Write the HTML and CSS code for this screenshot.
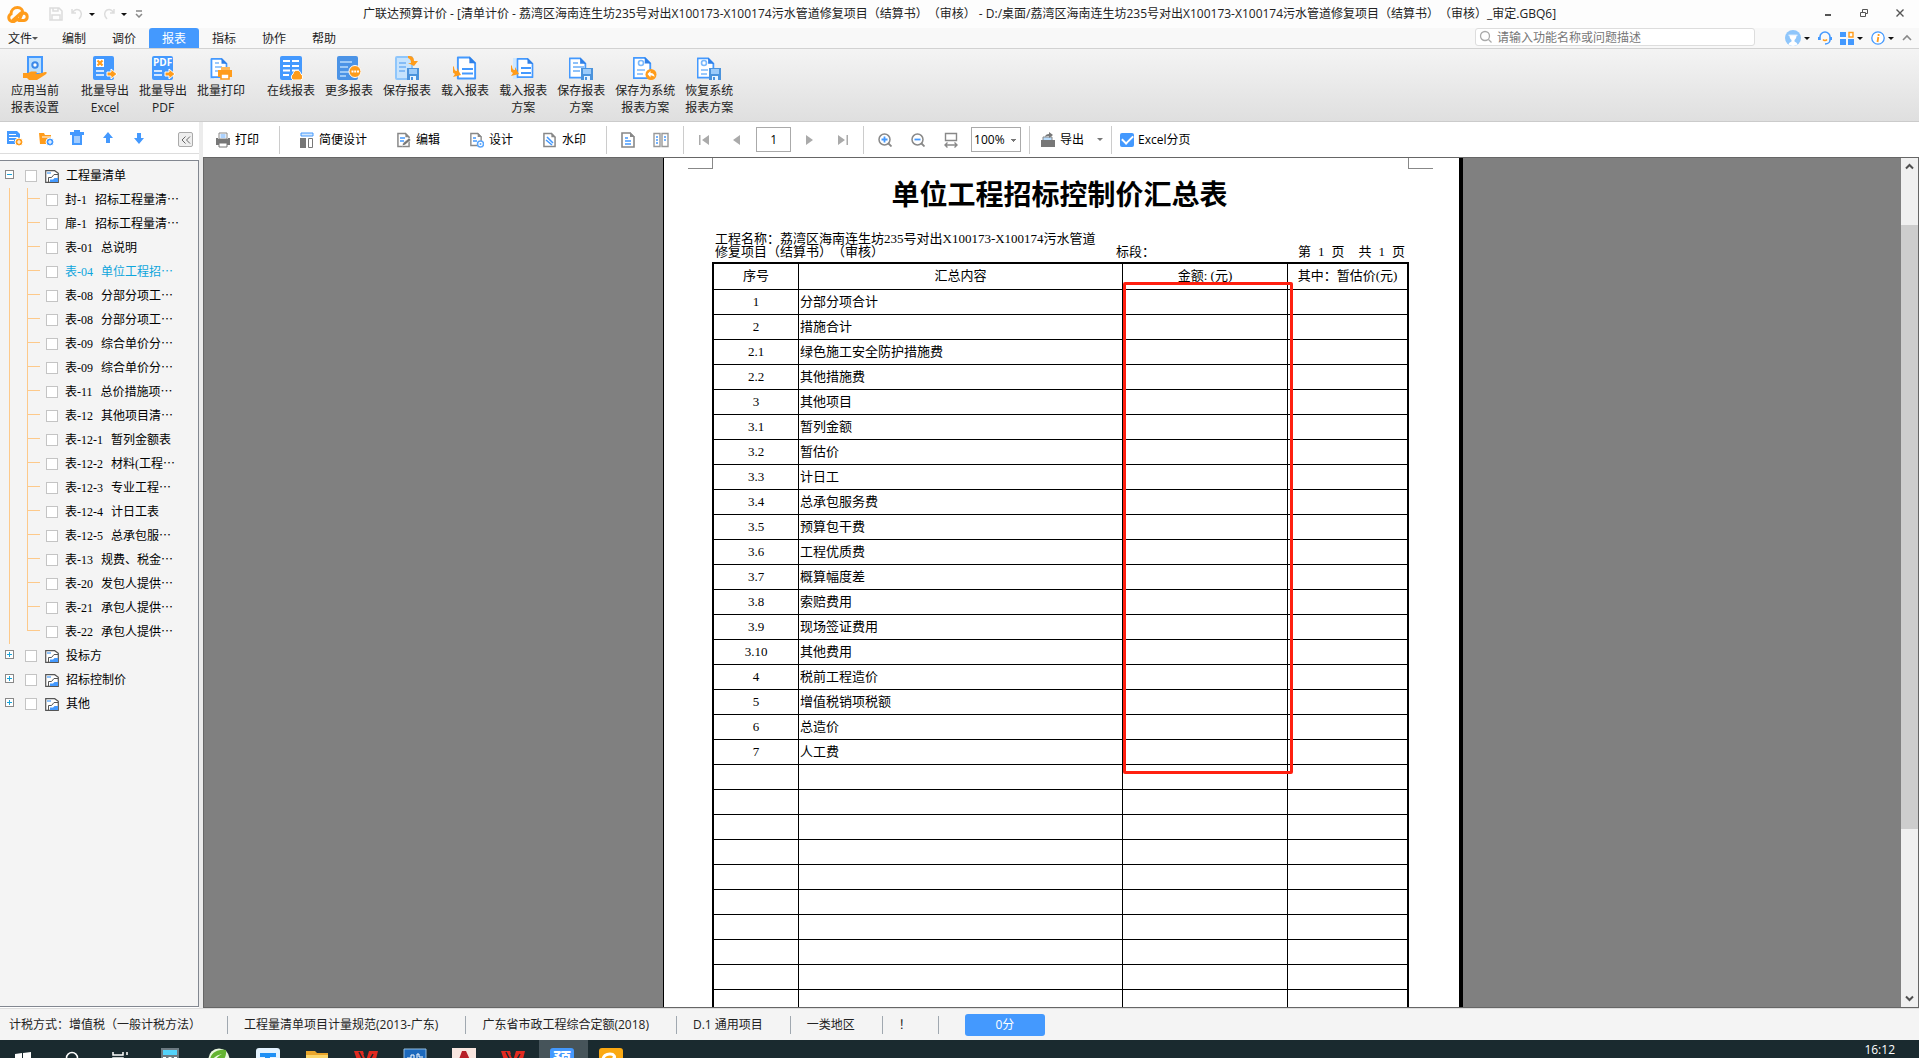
FILE: index.html
```html
<!DOCTYPE html>
<html lang="zh-CN">
<head>
    <meta charset="UTF-8">
    <meta name="viewport" content="width=device-width, initial-scale=1.0">
    <title>广联达预算计价</title>
    <link rel="stylesheet" href="styles.css">
</head>
<body>
    <!-- 公用图标 -->
    <svg class="defs" aria-hidden="true">
        <symbol id="doc" viewBox="0 0 24 24">
            <path d="M3 1h12l6 6v16H3z" fill="#fff" stroke="#4499fe" stroke-width="2" stroke-linejoin="round"/>
            <path d="M15 0l7 7h-7z" fill="#2f7fe6"/>
        </symbol>
        <symbol id="disk" viewBox="0 0 12 12">
            <path d="M0 0h12v12H0z" fill="#4b93dc"/>
            <path d="M2 1h8v5H2z" fill="#9ccbfa"/>
            <path d="M3 8h6v4H3z" fill="#e9f4ff"/>
            <path d="M4 9h2v3H4z" fill="#4b93dc"/>
        </symbol>
        <symbol id="page" viewBox="0 0 14 16">
            <path d="M1 1h8l4 4v10H1z" fill="#fff" stroke="#888" stroke-width="1.6"/>
            <path d="M9 0v5h5z" fill="#888"/>
        </symbol>
        <symbol id="folder" viewBox="0 0 14 13">
            <path d="M.7.7h9l3.600 2.600v9H.7z" fill="#fff" stroke="#555" stroke-width="1.200"/>
            <path d="M2 2h4v2H2z" fill="#8fc3fb"/>
            <path d="M3.500 12V7.500h3L9 4.500h4" fill="none" stroke="#555"/>
            <path d="M5 12V9.500h3L9.500 8H13v4z" fill="#4499fe"/>
        </symbol>
        <symbol id="wps" viewBox="0 0 24 24">
            <path d="M0 0h9l3 10L15 0h9l-6 24H8z" fill="#e22a20"/>
            <path d="M10 3l4 9 5-9M5 1l5 10" stroke="#1a2a2f" stroke-width="1.500" fill="none"/>
        </symbol>
    </svg>

    <header class="titlebar">
        <svg class="logo" viewBox="0 0 22 17"><path d="M11 13l-4 2.500H5A4 4 0 0 1 4 8c0-4 3-6.500 6.500-6.500C14 1.500 15.500 4 15.500 5.500L6 14M12 14.500h5a3.800 3.800 0 0 0 0-7.500c-3 0-2.500 3-5 7.500" fill="none" stroke="#ff9c1b" stroke-width="3" stroke-linecap="round"/></svg>
        <div class="quick">
            <button type="button" aria-label="保存"><svg width="14" height="14" viewBox="0 0 14 14"><path d="M1 1h9l3 3v9H1zM4 1v3h5V1M3 13V8h8v5" fill="none" stroke="#dcdcdc" stroke-width="1.500"/></svg></button>
            <button type="button" aria-label="撤销"><svg width="12" height="12" viewBox="0 0 12 12"><path d="M1 1v4h4M1 5c2-3 5-4 7-3s4 5 0 9" fill="none" stroke="#ddd" stroke-width="1.500"/></svg><i class="caret"></i></button>
            <button type="button" aria-label="重做"><svg width="12" height="12" viewBox="0 0 12 12"><path d="M11 1v4H7M11 5C9 2 6 1 4 2s-4 5 0 9" fill="none" stroke="#ddd" stroke-width="1.500"/></svg><i class="caret"></i></button>
            <button type="button" aria-label="自定义"><svg width="8" height="8" viewBox="0 0 8 8"><path d="M1 1h6M1 4l3 3 3-3" fill="none" stroke="#888" stroke-width="1.500"/></svg></button>
        </div>
        <h1 class="window-title">广联达预算计价 - [清单计价 - 荔湾区海南连生坊235号对出X100173-X100174污水管道修复项目（结算书）（审核） - D:/桌面/荔湾区海南连生坊235号对出X100173-X100174污水管道修复项目（结算书）（审核）_审定.GBQ6]</h1>
        <div class="window-controls">
            <button type="button" aria-label="最小化"><svg width="10" height="10" viewBox="0 0 10 10"><path d="M2 7h6" stroke="#555" stroke-width="2"/></svg></button>
            <button type="button" aria-label="还原"><svg width="10" height="10" viewBox="0 0 10 10"><path d="M1.500 4.500h5v4h-5zM3.500 4V1.500h5v4H7" fill="none" stroke="#555"/></svg></button>
            <button type="button" aria-label="关闭"><svg width="10" height="10" viewBox="0 0 10 10"><path d="M1.500 1.500l7 7M8.500 1.500l-7 7" stroke="#555" stroke-width="1.400"/></svg></button>
        </div>
    </header>

    <nav class="menubar">
        <button type="button" class="file">文件<i class="caret"></i></button>
        <button type="button">编制</button>
        <button type="button">调价</button>
        <button type="button" class="active">报表</button>
        <button type="button">指标</button>
        <button type="button">协作</button>
        <button type="button">帮助</button>
        <label class="search">
            <svg width="14" height="14" viewBox="0 0 14 14"><circle cx="6" cy="6" r="4.500" fill="none" stroke="#aaa" stroke-width="1.300"/><path d="M9.500 9.500l3 3" stroke="#aaa" stroke-width="1.300"/></svg>
            <input type="text" placeholder="请输入功能名称或问题描述" aria-label="搜索">
        </label>
        <div class="account">
            <button type="button" aria-label="用户"><svg width="16" height="16" viewBox="0 0 16 16"><circle cx="8" cy="8" r="8" fill="#8fc6fb"/><path d="M3.500 14.500c.5-2 2-2.500 3-3V10C5 9 4.500 7 4.500 5.500h7C11.500 7 11 9 9.500 10v1.500c1 .5 2.500 1 3 3C10 16.400 6 16.400 3.500 14.500z" fill="#fff"/><path d="M3.500 5.200h9" stroke="#fff"/></svg><i class="caret"></i></button>
            <button type="button" aria-label="客服"><svg width="14" height="14" viewBox="0 0 14 14"><path d="M2 9V6a5 5 0 0 1 10 0v3c0 2-2 4-5 4" fill="none" stroke="#4499fe" stroke-width="1.600"/><path d="M0 6h2v3H0zM12 6h2v3h-2z" fill="#4499fe"/><path d="M5 8.500c1 1.300 3 1.300 4 0" fill="none" stroke="#ff9c1b" stroke-width="1.500"/></svg></button>
            <button type="button" aria-label="应用"><svg width="14" height="14" viewBox="0 0 14 14"><path d="M0 1h6v5H0zM0 8h6v6H0zM8 8h6v6H8z" fill="#4499fe"/><path d="M9 1.500h4V6H9z" fill="#fff" stroke="#ff9c1b" stroke-width="1.400"/></svg><i class="caret"></i></button>
            <button type="button" aria-label="信息"><svg width="14" height="14" viewBox="0 0 14 14"><circle cx="7" cy="7" r="6.200" fill="#fff" stroke="#4499fe" stroke-width="1.300"/><path d="M7.600 3v2M7.300 6l-.8 5" stroke="#ff9c1b" stroke-width="1.800"/></svg><i class="caret"></i></button>
            <button type="button" aria-label="收起功能区"><svg width="10" height="8" viewBox="0 0 10 8"><path d="M1 6l4-4 4 4" fill="none" stroke="#888" stroke-width="1.600"/></svg></button>
        </div>
    </nav>

    <!-- 功能区 -->
    <section class="ribbon">
        <button type="button" class="group-end">
            <svg viewBox="0 0 24 24"><path d="M5 1h14v17H5z" fill="#b9defd" stroke="#4499fe" stroke-width="2"/><circle cx="12" cy="9" r="2.700" fill="#fff" stroke="#3a88e8" stroke-width="2"/><path d="M0 17h5l3-1.500h4c3 0 2 2.500 0 2.500h3l7-2c3 0 2 2-1 3.500L14 24H6l-2-2H0z" fill="#ff9c1b"/></svg>
            应用当前<br>报表设置
        </button>
        <button type="button">
            <svg viewBox="0 0 24 24"><rect x="0" y="0" width="21" height="24" rx="2" fill="#4499fe"/><path d="M3 3h8v8H3z" fill="#fff"/><path d="M4.500 4.500l5 5M9.500 4.500l-5 5" stroke="#ff9c1b" stroke-width="2.200"/><path d="M3 15h8M3 19h8" stroke="#fff" stroke-width="1.600"/><path d="M14 16h4v-3l6 5-6 5v-3h-4z" fill="#ff9c1b" stroke="#fff"/></svg>
            批量导出<br>Excel
        </button>
        <button type="button">
            <svg viewBox="0 0 24 24"><rect x="1" y="0" width="21" height="24" rx="2" fill="#4499fe"/><text x="2" y="10" class="pdf">PDF</text><path d="M3 15h8M3 19h8" stroke="#fff" stroke-width="1.600"/><path d="M14 16h4v-3l6 5-6 5v-3h-4z" fill="#ff9c1b" stroke="#fff"/></svg>
            批量导出<br>PDF
        </button>
        <button type="button" class="group-end">
            <svg viewBox="0 0 24 24"><path d="M1 3h4v20H1z" fill="#c4e2fd"/><use href="#doc" width="20" height="24"/><path d="M6 7h4M6 11h7M6 15h3" stroke="#7ab8fb" stroke-width="1.600"/><path d="M12 11h9v4h-9z" fill="#ffb95a"/><path d="M9 14h14v7H9z" fill="#ff9c1b"/><path d="M12 18h8v5h-8z" fill="#fff" stroke="#ff9c1b" stroke-width="1.600"/></svg>
            批量打印
        </button>
        <button type="button">
            <svg viewBox="0 0 24 24"><rect x="1" y="0" width="22" height="24" rx="2" fill="#4499fe"/><path d="M4 5h7M13 5h7M4 10h7M13 10h7M4 14.500h7M13 14.500h7M4 19h6" stroke="#fff" stroke-width="2"/><path d="M14 24a3.500 3.500 0 0 1 0-6c1-5 7-5 8 0a3.500 3.500 0 0 1 0 6z" fill="#ff9c1b" stroke="#fff"/></svg>
            在线报表
        </button>
        <button type="button">
            <svg viewBox="0 0 24 24"><rect x="0" y="0" width="21" height="24" rx="2" fill="#4b93e6"/><path d="M3 6h12M3 11h8M3 16h9M3 20h6" stroke="#b9dcfc" stroke-width="1.600"/><circle cx="18" cy="15.500" r="6" fill="#ff9c1b" stroke="#fff"/><path d="M14.500 15.500h2M17.200 15.500h2M20 15.500h2" stroke="#fff" stroke-width="1.800"/></svg>
            更多报表
        </button>
        <button type="button">
            <svg viewBox="0 0 24 24"><rect x="1" y="1" width="16" height="22" rx="1" fill="#c6e3fd" stroke="#8fc6fb" stroke-width="2"/><path d="M4 7h7M4 11h7M4 15h6" stroke="#6fb0f5" stroke-width="1.500"/><path d="M13 0c5 0 6 2 6 5h4l-4 5-6-3h3c0-3-1-4-3-5z" fill="#ff9c1b"/><use href="#disk" x="12" y="12" width="12" height="12"/></svg>
            保存报表
        </button>
        <button type="button">
            <svg viewBox="0 0 24 24"><use href="#doc" x="2" width="23" height="24"/><path d="M9 13h11M9 17.500h11" stroke="#4499fe" stroke-width="1.800"/><path d="M1 10c0 4 1 5 3 5v-3l4 7-8 2 2-3c-3-1-4-5-1-8z" fill="#ff9c1b"/></svg>
            载入报表
        </button>
        <button type="button">
            <svg viewBox="0 0 24 24"><path d="M2 2h5v21H2z" fill="#d0e8fe"/><use href="#doc" x="4" width="20" height="24"/><path d="M10 12h10M10 17h10" stroke="#4499fe" stroke-width="1.800"/><path d="M1 9c0 4 1 5 3 5v-3l4 7-8 2 2-3c-3-1-4-5-1-8z" fill="#ff9c1b"/></svg>
            载入报表<br>方案
        </button>
        <button type="button">
            <svg viewBox="0 0 24 24"><use href="#doc" x="-2" width="21" height="24"/><path d="M4 7h5M4 11h11M4 15h7" stroke="#69adf8" stroke-width="1.600"/><use href="#disk" x="12" y="12" width="12" height="12"/></svg>
            保存报表<br>方案
        </button>
        <button type="button">
            <svg viewBox="0 0 24 24"><use href="#doc" x="-2" width="22" height="24"/><circle cx="8" cy="7" r="2.500" fill="none" stroke="#7ab8fb" stroke-width="1.600"/><path d="M4 14h8M4 18h6" stroke="#7ab8fb" stroke-width="1.600"/><circle cx="18" cy="18.500" r="5.500" fill="#ff9c1b"/><path d="M14.500 18l3-3v2c3 0 4 2 4 4-1-1-2-1.500-4-1.500v2z" fill="#fff"/></svg>
            保存为系统<br>报表方案
        </button>
        <button type="button">
            <svg viewBox="0 0 24 24"><use href="#doc" x="-2" width="21" height="24"/><circle cx="7" cy="7" r="2.500" fill="none" stroke="#7ab8fb" stroke-width="1.600"/><path d="M4 14h7M4 18h6" stroke="#7ab8fb" stroke-width="1.600"/><use href="#disk" x="12" y="12" width="12" height="12"/></svg>
            恢复系统<br>报表方案
        </button>
    </section>

    <main class="workspace">
        <aside class="sidebar">
            <div class="side-tools">
                <button type="button" aria-label="新建报表"><svg width="16" height="16" viewBox="0 0 16 16"><path d="M0 1h10l3 3v10H0z" fill="#4499fe"/><path d="M2 4.500h7M2 7.500h9M2 10.500h5" stroke="#fff"/><circle cx="12" cy="12" r="4" fill="#ff9c1b" stroke="#fff"/><path d="M10 12h4M12 10v4" stroke="#fff" stroke-width="1.200"/></svg></button>
                <button type="button" aria-label="新建文件夹"><svg width="16" height="16" viewBox="0 0 16 16"><path d="M1 3h5l1 2h6v9H2z" fill="#ff9c1b"/><path d="M4 7h10" stroke="#fff"/><circle cx="12" cy="12" r="4" fill="#4499fe" stroke="#fff"/><path d="M10 12h4M12 10v4" stroke="#fff" stroke-width="1.200"/></svg></button>
                <button type="button" aria-label="删除"><svg width="16" height="16" viewBox="0 0 16 16"><path d="M1 2h4V0h6v2h4v3H1zM3 5h10v10H3z" fill="#4499fe"/><path d="M6 6v7M8 6v7M10 6v7" stroke="#fff"/></svg></button>
                <button type="button" aria-label="上移"><svg width="16" height="16" viewBox="0 0 16 16"><path d="M8 2l5 6h-3v5H6V8H3z" fill="#4499fe"/></svg></button>
                <button type="button" aria-label="下移"><svg width="16" height="16" viewBox="0 0 16 16"><path d="M8 14l5-6h-3V3H6v5H3z" fill="#4499fe"/></svg></button>
                <button type="button" class="collapse" aria-label="折叠"><svg width="10" height="8" viewBox="0 0 10 8"><path d="M4.500.5L1 4l3.500 3.500M9 .5L5.500 4 9 7.500" fill="none" stroke="#666"/></svg></button>
            </div>
            <ul class="tree">
                <li>
                    <div class="node"><button type="button" class="toggle open" aria-label="折叠"></button><input type="checkbox" id="g1"><svg class="folder"><use href="#folder"/></svg><label for="g1">工程量清单</label></div>
                    <ul class="leaves">
                        <li><input type="checkbox" id="r1"><label for="r1"><span>封-1</span><span>招标工程量清⋯</span></label></li>
                        <li><input type="checkbox" id="r2"><label for="r2"><span>扉-1</span><span>招标工程量清⋯</span></label></li>
                        <li><input type="checkbox" id="r3"><label for="r3"><span>表-01</span><span>总说明</span></label></li>
                        <li class="current"><input type="checkbox" id="r4"><label for="r4"><span>表-04</span><span>单位工程招⋯</span></label></li>
                        <li><input type="checkbox" id="r5"><label for="r5"><span>表-08</span><span>分部分项工⋯</span></label></li>
                        <li><input type="checkbox" id="r6"><label for="r6"><span>表-08</span><span>分部分项工⋯</span></label></li>
                        <li><input type="checkbox" id="r7"><label for="r7"><span>表-09</span><span>综合单价分⋯</span></label></li>
                        <li><input type="checkbox" id="r8"><label for="r8"><span>表-09</span><span>综合单价分⋯</span></label></li>
                        <li><input type="checkbox" id="r9"><label for="r9"><span>表-11</span><span>总价措施项⋯</span></label></li>
                        <li><input type="checkbox" id="r10"><label for="r10"><span>表-12</span><span>其他项目清⋯</span></label></li>
                        <li><input type="checkbox" id="r11"><label for="r11"><span>表-12-1</span><span>暂列金额表</span></label></li>
                        <li><input type="checkbox" id="r12"><label for="r12"><span>表-12-2</span><span>材料(工程⋯</span></label></li>
                        <li><input type="checkbox" id="r13"><label for="r13"><span>表-12-3</span><span>专业工程⋯</span></label></li>
                        <li><input type="checkbox" id="r14"><label for="r14"><span>表-12-4</span><span>计日工表</span></label></li>
                        <li><input type="checkbox" id="r15"><label for="r15"><span>表-12-5</span><span>总承包服⋯</span></label></li>
                        <li><input type="checkbox" id="r16"><label for="r16"><span>表-13</span><span>规费、税金⋯</span></label></li>
                        <li><input type="checkbox" id="r17"><label for="r17"><span>表-20</span><span>发包人提供⋯</span></label></li>
                        <li><input type="checkbox" id="r18"><label for="r18"><span>表-21</span><span>承包人提供⋯</span></label></li>
                        <li><input type="checkbox" id="r19"><label for="r19"><span>表-22</span><span>承包人提供⋯</span></label></li>
                    </ul>
                </li>
                <li><div class="node"><button type="button" class="toggle" aria-label="展开"></button><input type="checkbox" id="g2"><svg class="folder"><use href="#folder"/></svg><label for="g2">投标方</label></div></li>
                <li><div class="node"><button type="button" class="toggle" aria-label="展开"></button><input type="checkbox" id="g3"><svg class="folder"><use href="#folder"/></svg><label for="g3">招标控制价</label></div></li>
                <li><div class="node"><button type="button" class="toggle" aria-label="展开"></button><input type="checkbox" id="g4"><svg class="folder"><use href="#folder"/></svg><label for="g4">其他</label></div></li>
            </ul>
        </aside>

        <section class="viewer">
            <div class="toolbar">
                <div class="tools">
                    <button type="button" class="tool"><svg width="14" height="16" viewBox="0 0 14 16"><path d="M3 1h8v6H3z" fill="#fff" stroke="#888"/><path d="M4.500 3h5M4.500 5h5" stroke="#5aa5fb"/><path d="M0 6h2v1h10V6h2v7H0z" fill="#777"/><path d="M3 11h8v4H3z" fill="#fff" stroke="#777"/></svg>打印</button>
                </div>
                <div class="tools">
                    <button type="button" class="tool"><svg width="14" height="16" viewBox="0 0 14 16"><path d="M1 1h12v3H1z" fill="#d5e9fe" stroke="#4499fe"/><path d="M0 6h6v10H0z" fill="#777"/><path d="M8.500 6.500h4v9h-4z" fill="#fff" stroke="#777"/></svg>简便设计</button>
                    <button type="button" class="tool"><svg width="14" height="16" viewBox="0 0 14 16"><use href="#page" width="13" height="16"/><path d="M3 6h5M3 9h4" stroke="#4499fe" stroke-width="1.400"/><path d="M5 14l1-3 6-5 2 2-6 5z" fill="#777" stroke="#fff" stroke-width=".6"/></svg>编辑</button>
                    <button type="button" class="tool"><svg width="14" height="16" viewBox="0 0 14 16"><use href="#page" width="12" height="15"/><path d="M3 6h3M3 9h4" stroke="#4499fe" stroke-width="1.400"/><circle cx="10.500" cy="12" r="3" fill="#fff" stroke="#5aa5fb" stroke-width="1.500"/><circle cx="10.500" cy="12" r="1" fill="#5aa5fb"/></svg>设计</button>
                    <button type="button" class="tool"><svg width="14" height="16" viewBox="0 0 14 16"><use href="#page" width="13" height="16"/><path d="M3 8l6 5M4 5l6 6" stroke="#4499fe" stroke-width="1.600"/></svg>水印</button>
                </div>
                <div class="tools">
                    <button type="button" class="icon-tool" aria-label="单页"><svg width="14" height="16" viewBox="0 0 14 16"><use href="#page" width="14" height="16"/><path d="M4 6h3M4 9h6M4 12h6" stroke="#4499fe" stroke-width="1.500"/></svg></button>
                    <button type="button" class="icon-tool" aria-label="双页"><svg width="16" height="16" viewBox="0 0 16 16"><path d="M1 1.500h6v13H1zM9 1.500h6v13H9z" fill="#fff" stroke="#999" stroke-width="1.400"/><path d="M3 5h2M3 8h2M3 11h2M11 5h2M11 8h2" stroke="#4499fe" stroke-width="1.500"/></svg></button>
                </div>
                <div class="tools">
                    <button type="button" class="icon-tool" aria-label="首页"><svg width="14" height="12" viewBox="0 0 14 12"><path d="M1 1h1.500v10H1zM11 1v10L4 6z" fill="#aaa"/></svg></button>
                    <button type="button" class="icon-tool" aria-label="上一页"><svg width="14" height="12" viewBox="0 0 14 12"><path d="M10 1v10L3 6z" fill="#aaa"/></svg></button>
                    <input type="text" class="page-no" value="1" aria-label="页码">
                    <button type="button" class="icon-tool" aria-label="下一页"><svg width="14" height="12" viewBox="0 0 14 12"><path d="M3 1v10l7-5z" fill="#aaa"/></svg></button>
                    <button type="button" class="icon-tool" aria-label="末页"><svg width="14" height="12" viewBox="0 0 14 12"><path d="M13 1h-1.500v10H13zM3 1v10l7-5z" fill="#aaa"/></svg></button>
                </div>
                <div class="tools zoom-tools">
                    <button type="button" class="icon-tool" aria-label="放大"><svg width="14" height="14" viewBox="0 0 14 14"><circle cx="6.500" cy="6.500" r="5.500" fill="#fff" stroke="#888" stroke-width="1.500"/><path d="M10.500 10.500l3 3" stroke="#888" stroke-width="1.800"/><path d="M3.500 6.500h6M6.500 3.500v6" stroke="#4499fe" stroke-width="1.800"/></svg></button>
                    <button type="button" class="icon-tool" aria-label="缩小"><svg width="14" height="14" viewBox="0 0 14 14"><circle cx="6.500" cy="6.500" r="5.500" fill="#fff" stroke="#888" stroke-width="1.500"/><path d="M10.500 10.500l3 3" stroke="#888" stroke-width="1.800"/><path d="M3.500 6.500h6" stroke="#4499fe" stroke-width="1.800"/></svg></button>
                    <button type="button" class="icon-tool" aria-label="适合宽度"><svg width="14" height="16" viewBox="0 0 14 16"><path d="M1.500 1.500h11v7h-11zM1 13h12M3.500 10.500L1 13l2.500 2.500M10.500 10.500L13 13l-2.500 2.500" fill="none" stroke="#888" stroke-width="1.400"/></svg></button>
                    <select class="zoom" aria-label="缩放比例"><option>100%</option></select>
                </div>
                <div class="tools">
                    <button type="button" class="tool export"><svg width="14" height="16" viewBox="0 0 14 16"><path d="M0 8h14v7H0z" fill="#777"/><path d="M2 8V5h9v3" fill="#b9dcfc" stroke="#888"/><path d="M4 5c0-2 2-3 4-3V0l4 3-4 3V4C6 4 5 4 4 5z" fill="#777"/></svg>导出<i class="caret"></i></button>
                </div>
                <label class="excel-page"><input type="checkbox" checked>Excel分页</label>
            </div>

            <div class="viewport">
                <div class="canvas">
                    <article class="sheet">
                        <div class="crop-marks"><i></i><i></i></div>
                        <h2>单位工程招标控制价汇总表</h2>
                        <div class="meta">
                            <p>工程名称：荔湾区海南连生坊235号对出X100173-X100174污水管道<br>修复项目（结算书）（审核）</p>
                            <p>标段：</p>
                            <p class="pages"><span>第</span><span>1</span><span>页</span><span class="total">共</span><span>1</span><span>页</span></p>
                        </div>
                        <div class="table-box">
                            <table>
                                <thead>
                                    <tr><th class="no">序号</th><th class="name">汇总内容</th><th class="amount">金额: (元)</th><th>其中：暂估价(元)</th></tr>
                                </thead>
                                <tbody>
                                    <tr><td>1</td><td>分部分项合计</td><td></td><td></td></tr>
                                    <tr><td>2</td><td>措施合计</td><td></td><td></td></tr>
                                    <tr><td>2.1</td><td>绿色施工安全防护措施费</td><td></td><td></td></tr>
                                    <tr><td>2.2</td><td>其他措施费</td><td></td><td></td></tr>
                                    <tr><td>3</td><td>其他项目</td><td></td><td></td></tr>
                                    <tr><td>3.1</td><td>暂列金额</td><td></td><td></td></tr>
                                    <tr><td>3.2</td><td>暂估价</td><td></td><td></td></tr>
                                    <tr><td>3.3</td><td>计日工</td><td></td><td></td></tr>
                                    <tr><td>3.4</td><td>总承包服务费</td><td></td><td></td></tr>
                                    <tr><td>3.5</td><td>预算包干费</td><td></td><td></td></tr>
                                    <tr><td>3.6</td><td>工程优质费</td><td></td><td></td></tr>
                                    <tr><td>3.7</td><td>概算幅度差</td><td></td><td></td></tr>
                                    <tr><td>3.8</td><td>索赔费用</td><td></td><td></td></tr>
                                    <tr><td>3.9</td><td>现场签证费用</td><td></td><td></td></tr>
                                    <tr><td>3.10</td><td>其他费用</td><td></td><td></td></tr>
                                    <tr><td>4</td><td>税前工程造价</td><td></td><td></td></tr>
                                    <tr><td>5</td><td>增值税销项税额</td><td></td><td></td></tr>
                                    <tr><td>6</td><td>总造价</td><td></td><td></td></tr>
                                    <tr><td>7</td><td>人工费</td><td></td><td></td></tr>
                                    <tr><td></td><td></td><td></td><td></td></tr>
                                    <tr><td></td><td></td><td></td><td></td></tr>
                                    <tr><td></td><td></td><td></td><td></td></tr>
                                    <tr><td></td><td></td><td></td><td></td></tr>
                                    <tr><td></td><td></td><td></td><td></td></tr>
                                    <tr><td></td><td></td><td></td><td></td></tr>
                                    <tr><td></td><td></td><td></td><td></td></tr>
                                    <tr><td></td><td></td><td></td><td></td></tr>
                                    <tr><td></td><td></td><td></td><td></td></tr>
                                    <tr><td></td><td></td><td></td><td></td></tr>
                                    <tr><td></td><td></td><td></td><td></td></tr>
                                </tbody>
                            </table>
                            <div class="highlight"></div>
                        </div>
                    </article>
                </div>
                <div class="scrollbar">
                    <button type="button" aria-label="向上滚动"><svg width="9" height="7" viewBox="0 0 9 7"><path d="M1 5.500L4.500 2 8 5.500" fill="none" stroke="#505050" stroke-width="2"/></svg></button>
                    <div class="track"><div class="thumb"></div></div>
                    <button type="button" aria-label="向下滚动"><svg width="9" height="7" viewBox="0 0 9 7"><path d="M1 1.500L4.500 5 8 1.500" fill="none" stroke="#505050" stroke-width="2"/></svg></button>
                </div>
            </div>
        </section>
    </main>

    <footer class="statusbar">
        <span class="tax">计税方式：增值税（一般计税方法）</span>
        <span>工程量清单项目计量规范(2013-广东)</span>
        <span>广东省市政工程综合定额(2018)</span>
        <span>D.1 通用项目</span>
        <span>一类地区</span>
        <span>！</span>
        <button type="button">0分</button>
    </footer>

    <!-- 任务栏 -->
    <div class="taskbar">
        <div class="app"><svg viewBox="0 0 24 24"><path d="M4 6l7-1v8H4zM12 5l8-1v9h-8zM4 14h7v7l-7-1zM12 14h8v8l-8-1z" fill="#fff"/></svg></div>
        <div class="app"><svg viewBox="0 0 24 24"><circle cx="12" cy="10" r="5.500" fill="none" stroke="#fff" stroke-width="1.500"/></svg></div>
        <div class="app"><svg viewBox="0 0 24 24"><path d="M4 4v3h10V4M18 4v3M18 10v9M4 10h10v7H4z" fill="none" stroke="#fff" stroke-width="1.500"/></svg></div>
        <div class="app"><svg viewBox="0 0 24 24"><path d="M3 0h18v24H3z" fill="#6d7a82"/><path d="M5 2h14v5H5z" fill="#54d3fb"/><path d="M5 10h14" stroke="#fff" stroke-width="2" stroke-dasharray="3 2.500"/></svg></div>
        <div class="app"><svg viewBox="0 0 24 24"><circle cx="12" cy="11" r="10.500" fill="#eaf8df"/><path d="M3 13C3 4 12 1 19 2c1 9-5 14-13 14 2-5 5-8 9-10-6 1-9 5-12 7z" fill="#64b532"/></svg></div>
        <div class="app"><svg viewBox="0 0 24 24"><rect width="24" height="24" rx="3" fill="#e4f3ff"/><path d="M4 5h16v4h-6v12h-5V9H4z" fill="#1e90f5"/></svg></div>
        <div class="app"><svg viewBox="0 0 24 24"><path d="M1 3h9l2 2h11v17H1z" fill="#e9a52b"/><path d="M1 7h22v15H1z" fill="#fad56b"/></svg></div>
        <div class="app"><svg viewBox="0 0 24 24"><use href="#wps" y="3" width="24" height="24"/></svg></div>
        <div class="app"><svg viewBox="0 0 24 24"><path d="M1 1h22v23H1z" fill="#1c69bd" stroke="#91bce2"/><path d="M4 10h4V7h3v3M14 10V6h2v3h4" fill="none" stroke="#fff"/></svg></div>
        <div class="app"><svg viewBox="0 0 24 24"><path d="M0 0h24v24H0z" fill="#f8e5df"/><path d="M6 14l4-11h4l5 11h-4l-1-3h-4l-1 3z" fill="#b71f27"/></svg></div>
        <div class="app"><svg viewBox="0 0 24 24"><use href="#wps" y="3" width="24" height="24"/></svg></div>
        <div class="app active"><svg viewBox="0 0 24 24"><rect width="24" height="24" rx="3" fill="#4499fe"/><text x="3" y="18" class="glyph">预</text></svg></div>
        <div class="app"><svg viewBox="0 0 24 24"><rect width="24" height="24" rx="3" fill="#fba912"/><path d="M4 12c0-4 3-6 7-6s6 3 3 5l-6 5" fill="none" stroke="#fff" stroke-width="3"/></svg></div>
        <time>16:12</time>
    </div>
</body>
</html>
```
FILE: styles.css
```css
* {
    box-sizing: border-box;
}
body {
    margin: 0;
    height: 100vh;
    display: flex;
    flex-direction: column;
    overflow: hidden;
    background-color: #fff;
    color: #222;
    font-family: "Open Sans", "Noto Sans CJK SC", sans-serif;
    font-size: 12px;
    line-height: 17px;
    text-spacing-trim: space-all;
}
button, input, select {
    font: inherit;
    color: inherit;
}
button {
    display: flex;
    align-items: center;
    padding: 0;
    border: none;
    background: none;
    cursor: pointer;
}
ul {
    margin: 0;
    padding: 0;
    list-style: none;
}
.defs {
    position: absolute;
    width: 0;
    height: 0;
}
.caret {
    border: 3px solid transparent;
    border-top-color: #111;
    border-bottom: none;
}

/* 标题栏 */
.titlebar {
    display: grid;
    grid-template-columns: 150px 1fr 150px;
    grid-template-rows: 28px;
    align-items: center;
    background-color: #fdfdfd;
}
.logo {
    grid-area: 1 / 1;
    width: 22px;
    height: 17px;
    margin-left: 7px;
}
.quick {
    grid-area: 1 / 1;
    display: flex;
    align-items: center;
    gap: 8px;
    padding-left: 49px;
}
.quick button {
    gap: 6px;
}
.window-title {
    margin: 0;
    padding-bottom: 2px;
    font-size: 12px;
    font-weight: normal;
    text-align: center;
    white-space: nowrap;
}
.window-controls {
    display: flex;
    justify-content: flex-end;
    gap: 26px;
    padding: 0 14px 2px 0;
}

/* 菜单栏 */
.menubar {
    display: flex;
    height: 21px;
    background-color: #f8f8f8;
    border-bottom: 1px solid #d2d2d2;
}
.menubar > button {
    width: 50px;
    justify-content: center;
}
.menubar .file {
    width: 49px;
    padding-left: 8px;
    justify-content: flex-start;
}
.menubar .active {
    background-color: #4499fe;
    border-radius: 3px 3px 0 0;
    color: #fff;
}
.file .caret {
    border-top-color: #555;
}
.search {
    display: flex;
    align-items: center;
    gap: 4px;
    width: 280px;
    height: 18px;
    margin-left: auto;
    padding: 0 3px;
    background-color: #fff;
    border: 1px solid #ddd;
    border-radius: 3px;
}
.search input {
    flex: 1;
    min-width: 0;
    height: 16px;
    padding: 0;
    border: none;
    outline: none;
    background: none;
}
.search input::placeholder {
    color: #777;
}
.account {
    display: flex;
    gap: 8px;
    padding: 0 7px 0 30px;
}
.account button {
    gap: 3px;
}

.ribbon {
    display: flex;
    align-items: flex-start;
    height: 73px;
    padding: 7px 6px 0;
    background: linear-gradient(#f4f4f4, #dfdfdf);
    border-bottom: 1px solid #cbcbcb;
}
.ribbon button {
    display: block;
    padding: 0 5px;
    text-align: center;
}
.ribbon svg {
    display: block;
    width: 24px;
    height: 24px;
    margin: 0 auto 2px;
}
.ribbon .group-end {
    margin-right: 12px;
}
.pdf {
    font-size: 10px;
    font-weight: bold;
    fill: #fff;
}

.workspace {
    flex: 1;
    display: flex;
    min-height: 0;
    background-color: #ececec;
}
.sidebar {
    display: flex;
    flex-direction: column;
    width: 199px;
    margin-right: 4px;
    padding-bottom: 1px;
    background-color: #fff;
}
.side-tools {
    display: flex;
    align-items: center;
    gap: 15px;
    height: 32px;
    padding: 0 6px 0 7px;
    border-bottom: 1px solid #ddd;
}
.side-tools .collapse {
    justify-content: center;
    width: 15px;
    height: 15px;
    margin: 4px 0 0 auto;
    border: 1px solid #aaa;
    border-radius: 2px;
    background-color: #eee;
}

/* 报表目录树 */
.tree {
    flex: 1;
    margin-top: 6px;
    padding-top: 3px;
    background-color: #f4f4f4;
    border: 1px solid #828790;
    border-left: none;
    color: #000;
    font-family: "Liberation Serif", "Noto Sans CJK SC", serif;
}
.node {
    display: flex;
    align-items: center;
    height: 24px;
    padding-left: 5px;
}
.tree input {
    appearance: none;
    flex: none;
    width: 12px;
    height: 12px;
    margin: 0;
    background-color: #fff;
    border: 1px solid #c4c4c4;
}
.toggle {
    width: 9px;
    height: 9px;
    margin: 0 11px 4px 0;
    border: 1px solid #888;
    background:
        linear-gradient(#1aa3d8, #1aa3d8) center / 5px 1px no-repeat,
        linear-gradient(#1aa3d8, #1aa3d8) center / 1px 5px no-repeat,
        #fff;
}
.toggle.open {
    background: linear-gradient(#1aa3d8, #1aa3d8) center / 5px 1px no-repeat, #fff;
}
.folder {
    width: 14px;
    height: 13px;
    margin: 0 7px 0 8px;
}
.leaves {
    margin-left: 9px;
    padding-left: 17px;
    border-left: 1px solid #fdc98a;
}
.leaves li {
    display: flex;
    align-items: center;
    gap: 7px;
    height: 24px;
    background:
        linear-gradient(#fdc98a, #fdc98a) 0 0 / 1px 100% no-repeat,
        linear-gradient(#fdc98a, #fdc98a) 0 10px / 13px 1px no-repeat;
}
.leaves li:last-child {
    background:
        linear-gradient(#fdc98a, #fdc98a) 0 0 / 1px 11px no-repeat,
        linear-gradient(#fdc98a, #fdc98a) 0 10px / 13px 1px no-repeat;
}
.leaves input {
    margin-left: 19px;
}
.leaves label {
    display: flex;
    gap: 8px;
    white-space: nowrap;
}
.current {
    color: #0ea5dc;
}

/* 报表预览 */
.viewer {
    flex: 1;
    display: flex;
    flex-direction: column;
    min-width: 0;
}
.toolbar {
    display: flex;
    align-items: center;
    height: 35px;
    padding-left: 1px;
    background-color: #fff;
    color: #000;
}
.tools {
    display: flex;
    align-items: center;
    gap: 6px;
    height: 28px;
    padding-right: 8px;
    margin-right: 8px;
    border-right: 1px solid #ccc;
}
.zoom-tools {
    gap: 7px;
}
.tool {
    gap: 5px;
    padding: 0 12px;
}
.icon-tool {
    padding: 0 6px;
}
.page-no {
    width: 35px;
    height: 25px;
    padding: 0;
    border: 1px solid #aaa;
    text-align: center;
}
.zoom {
    appearance: none;
    width: 50px;
    height: 25px;
    padding: 0 2px;
    border: 1px solid #aaa;
    border-radius: 0;
    background:
        linear-gradient(#777, #777) 39px 11px / 5px 1px no-repeat,
        linear-gradient(#777, #777) 40px 12px / 3px 1px no-repeat,
        linear-gradient(#777, #777) 41px 13px / 1px 1px no-repeat,
        #fff;
}
.export {
    padding: 0 0 0 3px;
}
.export .caret {
    margin-left: 8px;
    border-top-color: #777;
}
.excel-page {
    display: flex;
    align-items: center;
    gap: 4px;
}
.excel-page input {
    appearance: none;
    display: grid;
    place-items: center;
    width: 14px;
    height: 14px;
    margin: 0;
    border-radius: 2px;
    background-color: #4499fe;
}
.excel-page input::before {
    content: "";
    width: 9px;
    height: 5px;
    margin-bottom: 3px;
    border: solid #fff;
    border-width: 0 0 2px 2px;
    transform: rotate(-45deg);
}
.viewport {
    flex: 1;
    display: grid;
    grid-template-columns: 1fr 17px;
    grid-template-rows: 100%;
    min-height: 0;
    border: 1px solid #666;
}
.canvas {
    overflow: hidden;
    padding-left: 21px;
    background-color: #808080;
}
.sheet {
    width: 800px;
    height: 1123px;
    margin: 0 auto;
    background-color: #fff;
    border: solid #000;
    border-width: 0 4px 0 1px;
    color: #000;
    font-family: "Liberation Serif", "Noto Sans CJK SC", serif;
    font-size: 13px;
    line-height: 13px;
}
.crop-marks {
    display: flex;
    justify-content: space-between;
    padding: 0 26px 0 24px;
}
.crop-marks i {
    width: 25px;
    height: 11px;
    border: solid #888;
    border-width: 0 1px 1px 0;
}
.crop-marks i:last-child {
    border-width: 0 0 1px 1px;
}
.sheet h2 {
    margin: 7px 0 16px;
    padding-right: 4px;
    font-size: 28px;
    line-height: 40px;
    text-align: center;
}
.meta {
    display: grid;
    grid-template-columns: 401px 1fr auto;
    align-items: end;
    margin: 0 50px 0 48px;
    padding: 0 4px 4px 3px;
}
.meta p {
    margin: 0;
    white-space: nowrap;
}
.pages {
    display: flex;
    gap: 7px;
}
.pages .total {
    margin-left: 7px;
}
.table-box {
    position: relative;
    margin: 0 50px 0 48px;
}
.table-box table {
    width: 100%;
    table-layout: fixed;
    border-collapse: separate;
    border-spacing: 0;
    border: 2px solid #000;
    border-right-width: 1px;
}
th, td {
    height: 25px;
    padding: 0 1px 2px;
    border: solid #000;
    border-width: 0 1px 1px 0;
    font-weight: normal;
    text-align: left;
}
th {
    height: 26px;
}
th, td:first-child {
    text-align: center;
}
.no {
    width: 85px;
}
.name {
    width: 324px;
}
.amount {
    width: 165px;
}
/* 金额列的红框标注 */
.highlight {
    position: absolute;
    top: 20px;
    left: 411px;
    width: 170px;
    height: 492px;
    border: 3px solid #ff2010;
    border-radius: 2px;
}
.scrollbar {
    display: flex;
    flex-direction: column;
    background-color: #f0f0f0;
}
.scrollbar button {
    justify-content: center;
    height: 17px;
}
.track {
    flex: 1;
    padding-top: 50px;
}
.thumb {
    height: 79%;
    background-color: #cdcdcd;
}

.statusbar {
    display: flex;
    align-items: center;
    height: 32px;
    background-color: #f4f4f4;
    border-top: 1px solid #ddd;
}
.statusbar span {
    height: 18px;
    padding: 0 27px 0 16px;
    border-right: 1px solid #a0a8b0;
}
.statusbar .tax {
    padding: 0 26px 0 9px;
}
.statusbar button {
    justify-content: center;
    width: 80px;
    height: 22px;
    margin-left: 26px;
    border-radius: 3px;
    background-color: #4499fe;
    color: #fff;
}

.taskbar {
    display: flex;
    height: 18px;
    overflow: hidden;
    background-color: #1a2a2f;
    color: #fff;
}
.app {
    display: flex;
    justify-content: center;
    width: 49px;
    height: 40px;
    padding: 8px 4px 0 0;
}
.app svg {
    width: 24px;
    height: 24px;
}
.app.active {
    background-color: #46545a;
}
.glyph {
    font-size: 18px;
    font-weight: bold;
    fill: #fff;
}
.taskbar time {
    margin-left: auto;
    padding-right: 24px;
    line-height: 20px;
}
```
